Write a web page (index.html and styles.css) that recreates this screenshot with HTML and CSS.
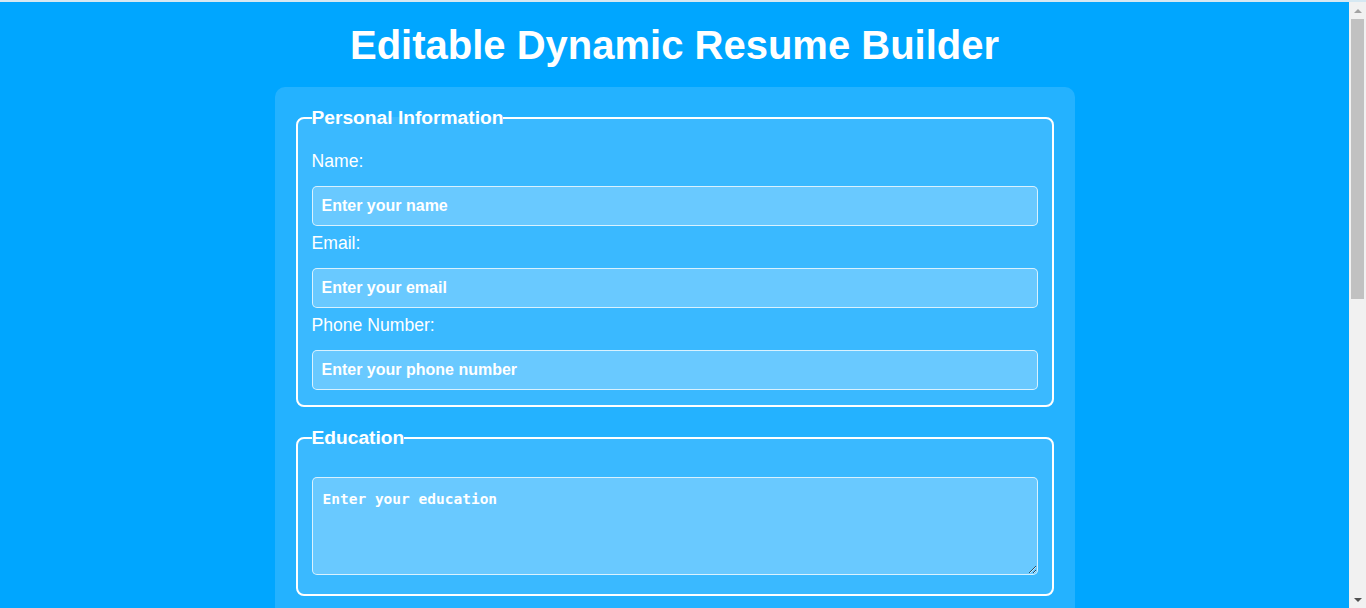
FILE: index.html
```html
<!DOCTYPE html>
<html lang="en">
<head>
<meta charset="UTF-8">
<title>Editable Dynamic Resume Builder</title>
<link rel="stylesheet" href="styles.css">
</head>
<body>
<div class="page">
<h1 class="title">Editable Dynamic Resume Builder</h1>
<form class="container">
  <fieldset class="section">
    <legend class="section-title">Personal Information</legend>
    <label class="field-label" for="name">Name:</label>
    <input class="field-input" id="name" type="text" placeholder="Enter your name">
    <label class="field-label" for="email">Email:</label>
    <input class="field-input" id="email" type="email" placeholder="Enter your email">
    <label class="field-label" for="phone">Phone Number:</label>
    <input class="field-input" id="phone" type="tel" placeholder="Enter your phone number">
  </fieldset>
  <fieldset class="section">
    <legend class="section-title">Education</legend>
    <textarea class="field-area" placeholder="Enter your education"></textarea>
  </fieldset>
  <fieldset class="section">
    <legend class="section-title">Work Experience</legend>
    <textarea class="field-area" placeholder="Enter your work experience"></textarea>
  </fieldset>
  <fieldset class="section">
    <legend class="section-title">Skills</legend>
    <textarea class="field-area" placeholder="Enter your skills"></textarea>
  </fieldset>
  <button class="generate" type="button">Generate Resume</button>
</form>
</div>
<div class="scrollbar" aria-hidden="true">
  <div class="sb-button"><span class="sb-arrow-up"></span></div>
  <div class="sb-thumb"></div>
  <div class="sb-track"></div>
  <div class="sb-button"><span class="sb-arrow-down"></span></div>
</div>
</body>
</html>
```

FILE: styles.css
```css
html,
body {
  height: 100%;
  overflow: hidden;
}

body {
  box-sizing: border-box;
  margin: 0;
  display: flex;
  background: #00a6ff;
  color: #ffffff;
  font-family: "Liberation Sans", Arial, sans-serif;
  border-top: 2px solid #d6e8f2;
}

.page {
  flex: 1;
  min-width: 0;
  overflow: hidden;
}

.scrollbar {
  width: 17px;
  flex: none;
  display: flex;
  flex-direction: column;
  background: #f1f1f1;
}

.sb-button {
  height: 17px;
  flex: none;
  display: flex;
  align-items: center;
  justify-content: center;
}

.sb-arrow-up {
  width: 0;
  height: 0;
  border-left: 4px solid transparent;
  border-right: 4px solid transparent;
  border-bottom: 4px solid #a3a3a3;
}

.sb-arrow-down {
  width: 0;
  height: 0;
  border-left: 4px solid transparent;
  border-right: 4px solid transparent;
  border-top: 4px solid #505050;
}

.sb-thumb {
  height: 280px;
  flex: none;
  margin: 0 2px;
  background: #c1c1c1;
}

.sb-track {
  flex: 1;
}

.title {
  font-size: 40px;
  font-weight: bold;
  text-align: center;
  margin: 21px 0 19px;
}

.container {
  box-sizing: border-box;
  width: 800px;
  margin: 0 auto;
  padding: 20px;
  background: rgba(255, 255, 255, 0.14);
  border-radius: 10px;
}

.section {
  margin: 0 1px 20px;
  padding: 15px 14px 15px;
  border: 2px solid #ffffff;
  border-radius: 8px;
  background: rgba(255, 255, 255, 0.1);
  min-width: 0;
}

.section-title {
  padding: 0;
  font-size: 19.2px;
  font-weight: bold;
  color: #ffffff;
}

.field-label {
  display: block;
  font-size: 17.6px;
  margin: 7px 0 14px;
}

.field-input {
  display: block;
  box-sizing: border-box;
  width: 100%;
  height: 40px;
  margin: 0;
  padding: 0 9px;
  border: 1px solid rgba(255, 255, 255, 0.75);
  border-radius: 5px;
  background: rgba(255, 255, 255, 0.24);
  color: #ffffff;
  font-family: "Liberation Sans", Arial, sans-serif;
  font-size: 16px;
  font-weight: bold;
  outline: none;
}

.field-input::placeholder,
.field-area::placeholder {
  color: #ffffff;
  opacity: 1;
}

.field-area {
  display: block;
  box-sizing: border-box;
  width: 100%;
  height: 98px;
  margin: 13px 0 4px;
  padding: 13px 10px 10px;
  border: 1px solid rgba(255, 255, 255, 0.75);
  border-radius: 5px;
  background: rgba(255, 255, 255, 0.24);
  color: #ffffff;
  font-family: "DejaVu Sans Mono", "Liberation Mono", monospace;
  font-size: 14.5px;
  font-weight: bold;
  outline: none;
}

.generate {
  display: block;
  width: 100%;
  height: 44px;
  border: 0;
  border-radius: 5px;
  background: #ffffff;
  color: #00a6ff;
  font-family: "Liberation Sans", Arial, sans-serif;
  font-size: 18px;
  font-weight: bold;
}
```
